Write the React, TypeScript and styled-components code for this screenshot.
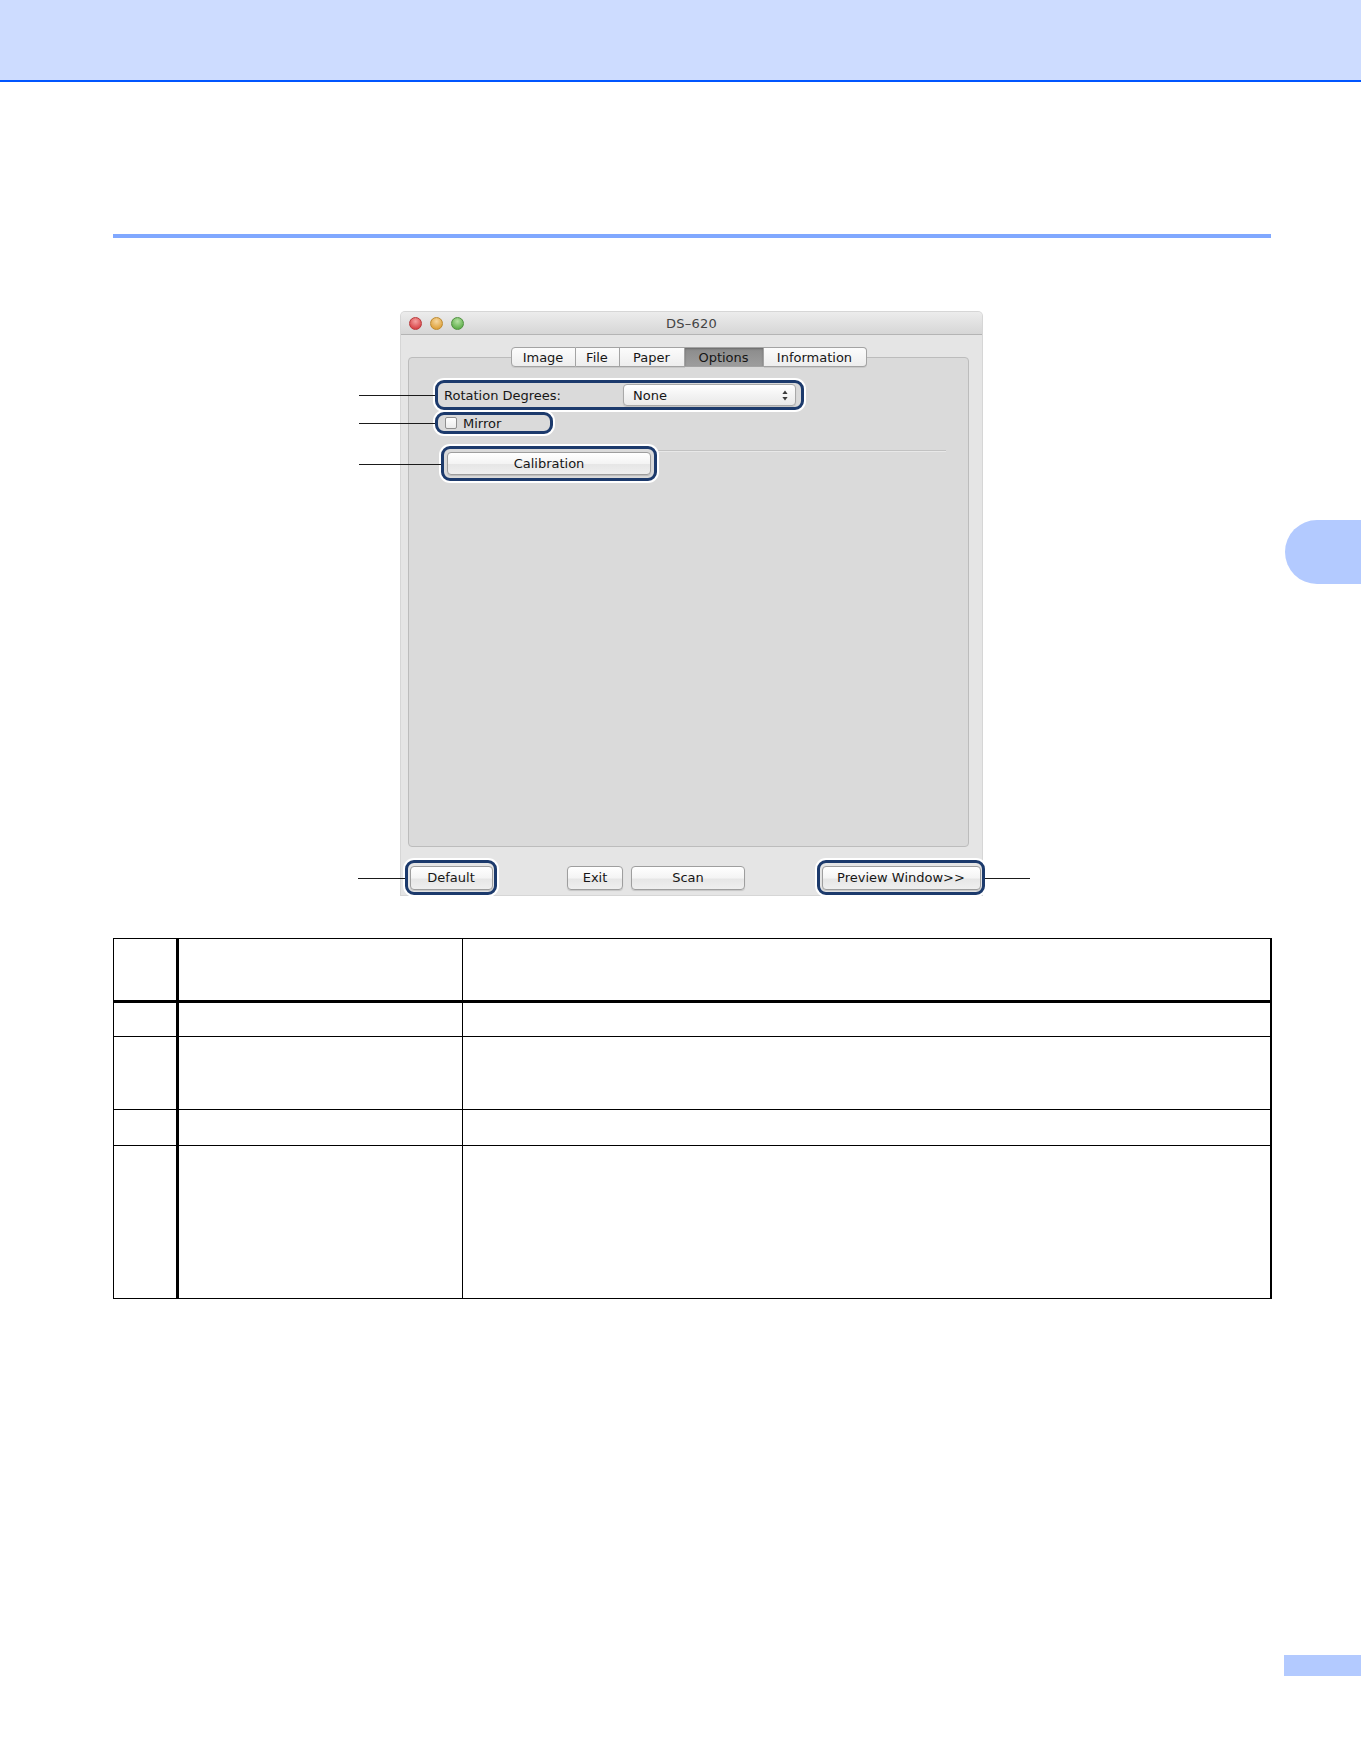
import styled, { createGlobalStyle } from "styled-components";

const GlobalStyle = createGlobalStyle`
  html, body {
    margin: 0;
    padding: 0;
    background: #ffffff;
  }
  body {
    font-family: "DejaVu Sans", "Liberation Sans", sans-serif;
  }
`;

const tabs = [
  { label: "Image", w: 65 },
  { label: "File", w: 44 },
  { label: "Paper", w: 65 },
  { label: "Options", w: 79, active: true },
  { label: "Information", w: 103 },
];

const tableRows = [63, 35, 73, 36, 153];

const UpDownArrows = () => (
  <svg width="6" height="11" viewBox="0 0 6 11">
    <path d="M3 0.5 L5.6 4 L0.4 4 Z" fill="#3a3a3a" />
    <path d="M3 10.5 L5.6 7 L0.4 7 Z" fill="#3a3a3a" />
  </svg>
);

const App: React.FC = () => {
  return (
    <Page>
      <GlobalStyle />
      <Banner />
      <SectionRule />
      <ThumbTab />

      <Figure>
        <Window>
          <TitleBar>
            <Lights>
              <Light $c1="#f5a1a0" $c2="#d9474a" $edge="#b8393b" />
              <Light $c1="#f6d79f" $c2="#dfa33e" $edge="#bd8a30" />
              <Light $c1="#b4e1a2" $c2="#62b04e" $edge="#4f9140" />
            </Lights>
            <Title>DS–620</Title>
            <span />
          </TitleBar>

          <WindowBody>
            <TabStrip>
              {tabs.map((t) => (
                <Tab key={t.label} $w={t.w} $active={!!t.active}>
                  {t.label}
                </Tab>
              ))}
            </TabStrip>

            <Panel>
              <Callout $lead={76} $w={369} $h={30}>
                <FieldLabel>Rotation Degrees:</FieldLabel>
                <Popup>
                  <span>None</span>
                  <UpDownArrows />
                </Popup>
              </Callout>

              <MirrorCallout $lead={76} $w={118} $h={22}>
                <CheckBox />
                <CheckLabel>Mirror</CheckLabel>
              </MirrorCallout>

              <CalibrationRow>
                <Callout $lead={82} $w={216} $h={35} $center>
                  <MacButton $w={204} $h={23}>
                    Calibration
                  </MacButton>
                </Callout>
              </CalibrationRow>
            </Panel>
          </WindowBody>

          <BottomBar>
            <Callout $lead={47} $w={92} $h={35} $center>
              <MacButton $w={83}>Default</MacButton>
            </Callout>
            <MacButton $w={56} $gap={70}>
              Exit
            </MacButton>
            <MacButton $w={114} $gap={8}>
              Scan
            </MacButton>
            <Callout $lead={45} $w={168} $h={35} $center $right $gap={72}>
              <MacButton $w={159}>Preview Window&gt;&gt;</MacButton>
            </Callout>
          </BottomBar>
        </Window>
      </Figure>

      <SpecTable>
        <tbody>
          {tableRows.map((h, i) => (
            <Row key={i} $h={h} $head={i === 0}>
              <NumCell />
              <NameCell />
              <DescCell />
            </Row>
          ))}
        </tbody>
      </SpecTable>

      <PageBox />
    </Page>
  );
};

export default App;

const uiFont = `"DejaVu Sans", "Liberation Sans", sans-serif`;

const Page = styled.div`
  position: relative;
  width: 1361px;
  min-height: 1757px;
  background: #ffffff;
  overflow: hidden;
`;

const Banner = styled.header`
  height: 80px;
  background: #cddcff;
  border-bottom: 2px solid #0055ff;
`;

const SectionRule = styled.div`
  margin: 152px 90px 0 113px;
  height: 4px;
  background: #80a8ff;
`;

const ThumbTab = styled.div`
  position: absolute;
  right: 0;
  top: 520px;
  width: 76px;
  height: 64px;
  border-radius: 32px 0 0 32px;
  background: #b3caff;
`;

const Figure = styled.div`
  display: flex;
  margin-top: 74px;
  padding-left: 401px;
`;

const Window = styled.div`
  width: 581px;
  height: 583px;
  background: #e5e5e5;
  border-radius: 4px 4px 0 0;
  box-shadow: 0 0 0 1px rgba(0, 0, 0, 0.16);
  display: flex;
  flex-direction: column;
`;

const TitleBar = styled.div`
  height: 23px;
  flex: none;
  display: grid;
  grid-template-columns: 1fr auto 1fr;
  align-items: center;
  border-radius: 4px 4px 0 0;
  background: linear-gradient(#ececec, #d6d6d6);
  border-bottom: 1px solid #b4b4b4;
  box-sizing: border-box;
`;

const Lights = styled.div`
  display: flex;
  gap: 8px;
  padding-left: 8px;
`;

const Light = styled.span<{ $c1: string; $c2: string; $edge: string }>`
  width: 13px;
  height: 13px;
  border-radius: 50%;
  box-sizing: border-box;
  border: 1px solid ${(p) => p.$edge};
  background: radial-gradient(
    circle at 50% 30%,
    ${(p) => p.$c1} 0%,
    ${(p) => p.$c2} 75%
  );
`;

const Title = styled.span`
  font-size: 13px;
  color: #444444;
  letter-spacing: 0.2px;
`;

const WindowBody = styled.div`
  flex: none;
  display: flex;
  flex-direction: column;
  padding: 0 13px 0 7px;
`;

const TabStrip = styled.div`
  position: relative;
  z-index: 1;
  display: flex;
  justify-content: center;
  margin: 12px 0 -10px;
  height: 20px;
`;

const Tab = styled.div<{ $w: number; $active: boolean }>`
  width: ${(p) => p.$w}px;
  height: 20px;
  box-sizing: border-box;
  display: flex;
  align-items: center;
  justify-content: center;
  font-size: 13px;
  color: #161616;
  border: 1px solid #a3a3a3;
  border-left-width: 0;
  background: ${(p) =>
    p.$active
      ? "linear-gradient(#8b8b8b, #9d9d9d)"
      : "linear-gradient(#fcfcfc, #ededed)"};
  box-shadow: ${(p) =>
    p.$active ? "inset 0 1px 2px rgba(0,0,0,0.25)" : "0 1px 0 rgba(0,0,0,0.08)"};

  &:first-child {
    border-left-width: 1px;
    border-radius: 4px 0 0 4px;
  }
  &:last-child {
    border-radius: 0 4px 4px 0;
  }
`;

const Panel = styled.div`
  height: 490px;
  box-sizing: border-box;
  background: #dadada;
  border: 1px solid #bcbcbc;
  border-radius: 4px;
  padding: 22px 0 0 26px;
  display: flex;
  flex-direction: column;
  align-items: flex-start;
`;

const Callout = styled.div<{
  $lead: number;
  $w: number;
  $h: number;
  $center?: boolean;
  $right?: boolean;
  $gap?: number;
}>`
  position: relative;
  z-index: 1;
  flex: none;
  box-sizing: border-box;
  width: ${(p) => p.$w}px;
  height: ${(p) => p.$h}px;
  margin-left: ${(p) => p.$gap ?? 0}px;
  display: flex;
  align-items: center;
  justify-content: ${(p) => (p.$center ? "center" : "flex-start")};
  border: 3px solid #1c3a6c;
  border-radius: 9px;
  box-shadow: 0 0 0 2px #ffffff;
  background: inherit;

  &::before {
    content: "";
    position: absolute;
    top: 50%;
    ${(p) => (p.$right ? "left: calc(100% + 3px);" : "right: calc(100% + 3px);")}
    width: ${(p) => p.$lead}px;
    height: 1px;
    background: #1a1a1a;
  }
`;

const MirrorCallout = styled(Callout)`
  margin-top: 2px;
`;

const FieldLabel = styled.span`
  font-size: 13px;
  color: #161616;
  padding-left: 6px;
`;

const Popup = styled.div`
  margin-left: auto;
  margin-right: 5px;
  width: 173px;
  height: 22px;
  box-sizing: border-box;
  display: flex;
  align-items: center;
  justify-content: space-between;
  padding: 0 7px 0 9px;
  border: 1px solid #a9a9a9;
  border-radius: 4px;
  background: linear-gradient(#ffffff, #f3f3f3 50%, #e9e9e9);
  box-shadow: 0 1px 1px rgba(0, 0, 0, 0.12);
  font-size: 13px;
  color: #161616;
`;

const CheckBox = styled.span`
  width: 12px;
  height: 12px;
  margin-left: 7px;
  box-sizing: border-box;
  border: 1px solid #8f8f8f;
  border-radius: 2px;
  background: linear-gradient(#ffffff, #ececec);
`;

const CheckLabel = styled.span`
  font-size: 13px;
  color: #161616;
  margin-left: 6px;
`;

const CalibrationRow = styled.div`
  position: relative;
  margin: 12px 0 0 6px;
  align-self: stretch;
  display: flex;
  background: #dadada;

  &::before {
    content: "";
    position: absolute;
    left: 8px;
    right: 22px;
    top: 4px;
    height: 1px;
    background: #c2c2c2;
    box-shadow: 0 1px 0 #e8e8e8;
  }
`;

const BottomBar = styled.div`
  flex: none;
  height: 48px;
  box-sizing: border-box;
  display: flex;
  align-items: center;
  padding: 13px 0 0 4px;
  background: #e5e5e5;
`;

const MacButton = styled.button<{ $w: number; $h?: number; $gap?: number }>`
  flex: none;
  width: ${(p) => p.$w}px;
  height: ${(p) => p.$h ?? 24}px;
  margin-left: ${(p) => p.$gap ?? 0}px;
  padding: 0;
  box-sizing: border-box;
  border: 1px solid #9e9e9e;
  border-radius: 4px;
  background: linear-gradient(#ffffff, #f4f4f4 50%, #e6e6e6 55%, #efefef);
  box-shadow: 0 1px 1px rgba(0, 0, 0, 0.14);
  font-family: ${uiFont};
  font-size: 13px;
  color: #161616;
`;

const SpecTable = styled.table`
  margin: 43px 0 0 113px;
  width: 1159px;
  border-collapse: collapse;
  table-layout: fixed;
`;

const Row = styled.tr<{ $h: number; $head: boolean }>`
  height: ${(p) => p.$h}px;

  & > td {
    border-top: 1px solid #000;
    border-bottom: ${(p) => (p.$head ? "3px" : "1px")} solid #000;
    padding: 0;
  }
`;

const NumCell = styled.td`
  width: 62px;
  border-left: 1px solid #000;
  border-right: 3px solid #000;
`;

const NameCell = styled.td`
  width: 283px;
  border-right: 1px solid #000;
`;

const DescCell = styled.td`
  border-right: 2px solid #000;
`;

const PageBox = styled.div`
  margin: 356px 0 0 1284px;
  width: 77px;
  height: 21px;
  background: #b3caff;
`;
